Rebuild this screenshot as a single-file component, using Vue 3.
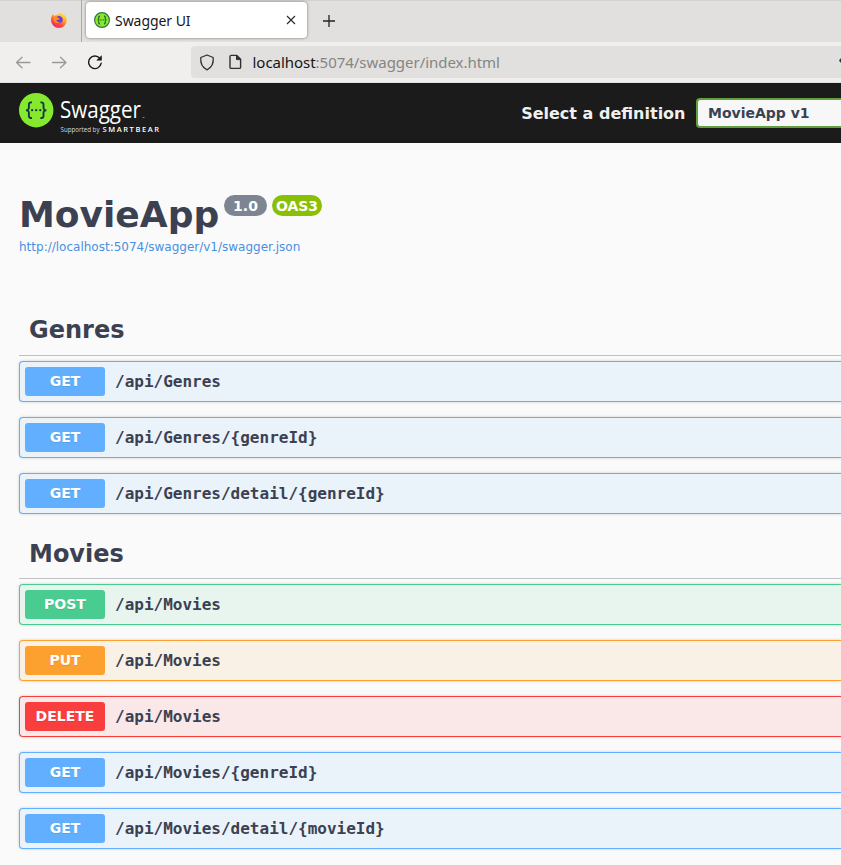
<script setup>
const sections = [
  {
    name: 'Genres',
    operations: [
      { method: 'GET', path: '/api/Genres' },
      { method: 'GET', path: '/api/Genres/{genreId}' },
      { method: 'GET', path: '/api/Genres/detail/{genreId}' },
    ],
  },
  {
    name: 'Movies',
    operations: [
      { method: 'POST', path: '/api/Movies' },
      { method: 'PUT', path: '/api/Movies' },
      { method: 'DELETE', path: '/api/Movies' },
      { method: 'GET', path: '/api/Movies/{genreId}' },
      { method: 'GET', path: '/api/Movies/detail/{movieId}' },
    ],
  },
]
</script>

<template>
  <div class="window">
    <div class="tabs">
      <div class="pinned">
        <svg width="18" height="18" viewBox="0 0 18 18">
          <defs>
            <linearGradient id="flame" x1="0.8" y1="0" x2="0.2" y2="1">
              <stop offset="0" stop-color="#fff044" />
              <stop offset="0.35" stop-color="#ffb02e" />
              <stop offset="0.65" stop-color="#ff5038" />
              <stop offset="1" stop-color="#ed1f73" />
            </linearGradient>
          </defs>
          <path d="M2.6 3.2 4 4.8 6 4.2 8.5 3 10 3.2 10.3 1.2 12.6 3.6 14.2 4.2 14.4 3.2C16 5 16.8 7 16.8 9.2A7.9 7.9 0 0 1 1 9.2C1 7 1.7 5 2.6 3.2Z" fill="url(#flame)" />
          <path d="M6.1 6.5C7.5 4.2 11.7 4.4 12.6 7.5 13.5 10.6 11 12.3 8.8 12.2 6.8 12 5.7 10.4 5.7 9L8 9.1 9.4 8 7.8 7.2Z" fill="#6b3fd4" />
          <path d="M3.3 6.4C4.3 5.2 6 5.3 7.1 6.4L9.7 7.2 8.4 8.4 6.5 8.8C6 10.5 8 11.5 10.1 10.6 8.7 13.1 4.3 12.4 3.4 9Z" fill="#ff8a2a" />
        </svg>
      </div>
      <div class="tab">
        <svg width="16" height="16" viewBox="0 0 16 16">
          <circle cx="8" cy="8" r="7.4" fill="#85ea2d" stroke="#38764a" stroke-width="1.2" />
          <g fill="none" stroke="#24503c" stroke-width="1.1">
            <path d="M6 4.1C4.6 4 4.8 5 4.8 6.2 4.8 7.4 4.4 8 3.5 8 4.4 8 4.8 8.6 4.8 9.8 4.8 11 4.6 12 6 11.9" />
            <path d="M10 4.1C11.4 4 11.2 5 11.2 6.2 11.2 7.4 11.6 8 12.5 8 11.6 8 11.2 8.6 11.2 9.8 11.2 11 11.4 12 10 11.9" />
            <path d="M5.6 8h5" stroke-dasharray="1.1 .7" />
          </g>
        </svg>
        <span class="tab-title">Swagger UI</span>
        <svg class="close" width="10" height="10" viewBox="0 0 10 10"><path d="M1 1 9 9M9 1 1 9" stroke="#2e2e2e" stroke-width="1.15" /></svg>
      </div>
      <svg class="plus" width="12" height="12" viewBox="0 0 12 12"><path d="M6 0v12M0 6h12" stroke="#222" stroke-width="1.3" /></svg>
    </div>

    <div class="toolbar">
      <svg width="16" height="16" viewBox="0 0 16 16" fill="none" stroke="#999997" stroke-width="1.3" stroke-linecap="round" stroke-linejoin="round"><path d="M15 8.5H1.8M7 3.2 1.5 8.5 7 13.8" /></svg>
      <svg width="16" height="16" viewBox="0 0 16 16" fill="none" stroke="#999997" stroke-width="1.3" stroke-linecap="round" stroke-linejoin="round"><path d="M1.5 8.5h13.2M9.5 3.2 15 8.5 9.5 13.8" /></svg>
      <svg width="16" height="16" viewBox="0 0 16 16"><path d="M12.8 4.2A6.3 6.3 0 1 0 14.2 9.2" fill="none" stroke="#1c1c1c" stroke-width="1.4" stroke-linecap="round" /><path d="M14.5 1.8V6.2H9.8Z" fill="#1c1c1c" stroke="#1c1c1c" stroke-width=".6" stroke-linejoin="round" /></svg>
      <div class="address">
        <svg width="16" height="17" viewBox="0 0 16 17"><path d="M8 1 14.2 3.5C14.6 7.5 13.7 13 8 15.8 2.3 13 1.4 7.5 1.8 3.5Z" fill="none" stroke="#303030" stroke-width="1.3" stroke-linejoin="round" /></svg>
        <svg class="page" width="13" height="16" viewBox="0 0 13 16"><path d="M2.2 1.4H7.8L11.6 5.2V13.2Q11.6 14.4 10.4 14.4H2.2Q1 14.4 1 13.2V2.6Q1 1.4 2.2 1.4Z" fill="none" stroke="#303030" stroke-width="1.4" /><path d="M7.5 1.4V5.6H11.7Z" fill="#303030" stroke="#303030" /></svg>
        <span class="url"><b>localhost</b>:5074/swagger/index.html</span>
        <svg class="edge" width="2" height="5" viewBox="0 0 2 5"><path d="M2 0 0 2.5 2 5Z" fill="#333" /></svg>
      </div>
    </div>

    <header class="topbar">
      <svg class="logo" width="144" height="44" viewBox="0 0 144 44">
        <circle cx="17.2" cy="18.2" r="17.2" fill="#85ea2d" />
        <g fill="none" stroke="#173647" stroke-width="1.9">
          <path d="M13 10.4C9.7 10 9.8 11.8 9.9 14 10.1 16.7 9.6 18.2 7 18.2 9.6 18.2 10.1 19.7 9.9 22.4 9.8 24.6 9.7 26.4 13 26" />
          <path d="M21.4 10.4C24.7 10 24.6 11.8 24.5 14 24.3 16.7 24.8 18.2 27.4 18.2 24.8 18.2 24.3 19.7 24.5 22.4 24.6 24.6 24.7 26.4 21.4 26" />
        </g>
        <g fill="#173647"><circle cx="13.1" cy="18.2" r="1.15" /><circle cx="17.2" cy="18.2" r="1.15" /><circle cx="21.3" cy="18.2" r="1.15" /></g>
        <text x="41" y="26" class="brand" textLength="81" lengthAdjust="spacingAndGlyphs">Swagger</text>
        <path d="M123.5 25.5h2" stroke="#999" stroke-width=".8" />
        <text x="41.5" y="39.6" class="support" textLength="39" lengthAdjust="spacingAndGlyphs">Supported by</text>
        <text x="83.5" y="39.6" class="company" textLength="56.5" lengthAdjust="spacing">SMARTBEAR</text>
      </svg>
      <div class="definition">
        <span>Select a definition</span>
        <div class="select">MovieApp v1</div>
      </div>
    </header>

    <main>
      <div class="info">
        <div class="title">
          <h1>MovieApp</h1>
          <span class="version">1.0</span>
          <span class="version oas">OAS3</span>
        </div>
        <a>http://localhost:5074/swagger/v1/swagger.json</a>
      </div>
      <section v-for="section in sections" :key="section.name">
        <h3>{{ section.name }}</h3>
        <div v-for="op in section.operations" :key="op.method + op.path" class="operation" :class="op.method.toLowerCase()">
          <span class="method">{{ op.method }}</span>
          <span class="path">{{ op.path }}</span>
        </div>
      </section>
    </main>
  </div>
</template>

<style>
body { margin: 0; background: #fafafa; overflow: hidden; }
</style>

<style scoped>
* { box-sizing: border-box; }
.window { height: 865px; overflow: hidden; background: #fafafa; color: #3b4151; font-family: "DejaVu Sans", sans-serif; }
svg { display: block; flex: none; }
.tabs { display: flex; height: 42px; background: #e1e0de; box-shadow: inset 0 1px #d2d1cf; }
.pinned { width: 82px; padding: 11px 0 0 50px; border-right: 1px solid #aaa9a7; }
.tab { display: flex; align-items: center; width: 221px; height: 36px; margin: 2px 0 0 4px; padding: 0 11px 0 8px; border-radius: 4px; background: #fff; box-shadow: 0 0 3px rgba(0,0,0,.5); color: #17171c; }
.tab-title { margin-left: 5px; padding-top: 2px; font: 14px/20px "Noto Sans", sans-serif; letter-spacing: -.05px; }
.close { margin-left: auto; }
.plus { margin: 15px 0 0 16px; }
.toolbar { display: flex; align-items: center; height: 41px; padding-left: 15px; gap: 20px; background: #f0efed; border-bottom: 1px solid #dce2df; }
.address { display: flex; align-items: center; flex: 1; height: 32px; margin-left: 68px; padding-left: 8px; border-radius: 4px 0 0 4px; background: #e1e0de; }
.page { margin-left: 14px; }
.url { margin-left: 10.5px; color: #858583; font: 15px/20px "Noto Sans", sans-serif; letter-spacing: -.03px; white-space: nowrap; }
.url b { font-weight: 400; color: #151515; }
.edge { margin: 0 0 4px auto; }
.topbar { display: flex; justify-content: space-between; height: 60px; padding-left: 19px; background: #1b1b1b; overflow: hidden; }
.logo { margin-top: 9px; }
.brand { font: 400 23.5px "Open Sans", sans-serif; fill: #fff; }
.support { font: 6.5px "Open Sans", sans-serif; fill: #ddd; }
.company { font: 600 7.5px "Open Sans", sans-serif; fill: #fff; }
.definition { display: flex; align-items: center; color: #f0f0f0; font-size: 16px; font-weight: 700; white-space: nowrap; }
.select { display: flex; align-items: center; width: 145px; height: 30px; margin-left: 10.5px; padding-left: 10px; border: 2px solid #62a03f; border-right: 0; border-radius: 4px 0 0 4px; background: #f7f7f7; color: #3b4151; font-size: 14px; }
main { padding-left: 19px; }
.info { height: 163px; padding-top: 50px; }
.title { display: flex; height: 45px; }
h1 { margin: 0; width: 205px; font-size: 36px; line-height: 43px; }
.version { display: flex; align-items: center; justify-content: center; width: 43px; height: 21px; margin: 2px 5px 0 0; border-radius: 11px; background: #7d8492; color: #fff; font-size: 14px; font-weight: 700; }
.oas { width: 50px; background: #89bf04; }
.info a { display: block; color: #4990e2; font-size: 12px; line-height: 18px; }
h3 { height: 50px; margin: 0 0 5px; padding: 10px; border-bottom: 1px solid #bfc1c4; font-size: 24px; line-height: 28px; }
section + section h3 { padding-top: 11px; }
.operation { display: flex; align-items: center; height: 41px; margin-bottom: 15px; padding-left: 5px; border: 1px solid var(--tone); border-right: 0; border-radius: 4px 0 0 4px; background: var(--fill); box-shadow: 0 0 3px rgba(0,0,0,.19); }
.get { --tone: #61affe; --fill: #eaf2fa; }
.post { --tone: #49cc90; --fill: #e8f5ef; }
.put { --tone: #fca130; --fill: #faf1e6; }
.delete { --tone: #f93e3e; --fill: #fae7e7; }
.method { width: 80px; height: 29px; border-radius: 3px; background: var(--tone); color: #fff; font-size: 14px; font-weight: 700; line-height: 29px; text-align: center; text-shadow: 0 1px 0 rgba(0,0,0,.1); }
.path { margin-left: 10px; font: 700 16px/20px "DejaVu Sans Mono", monospace; }
</style>
